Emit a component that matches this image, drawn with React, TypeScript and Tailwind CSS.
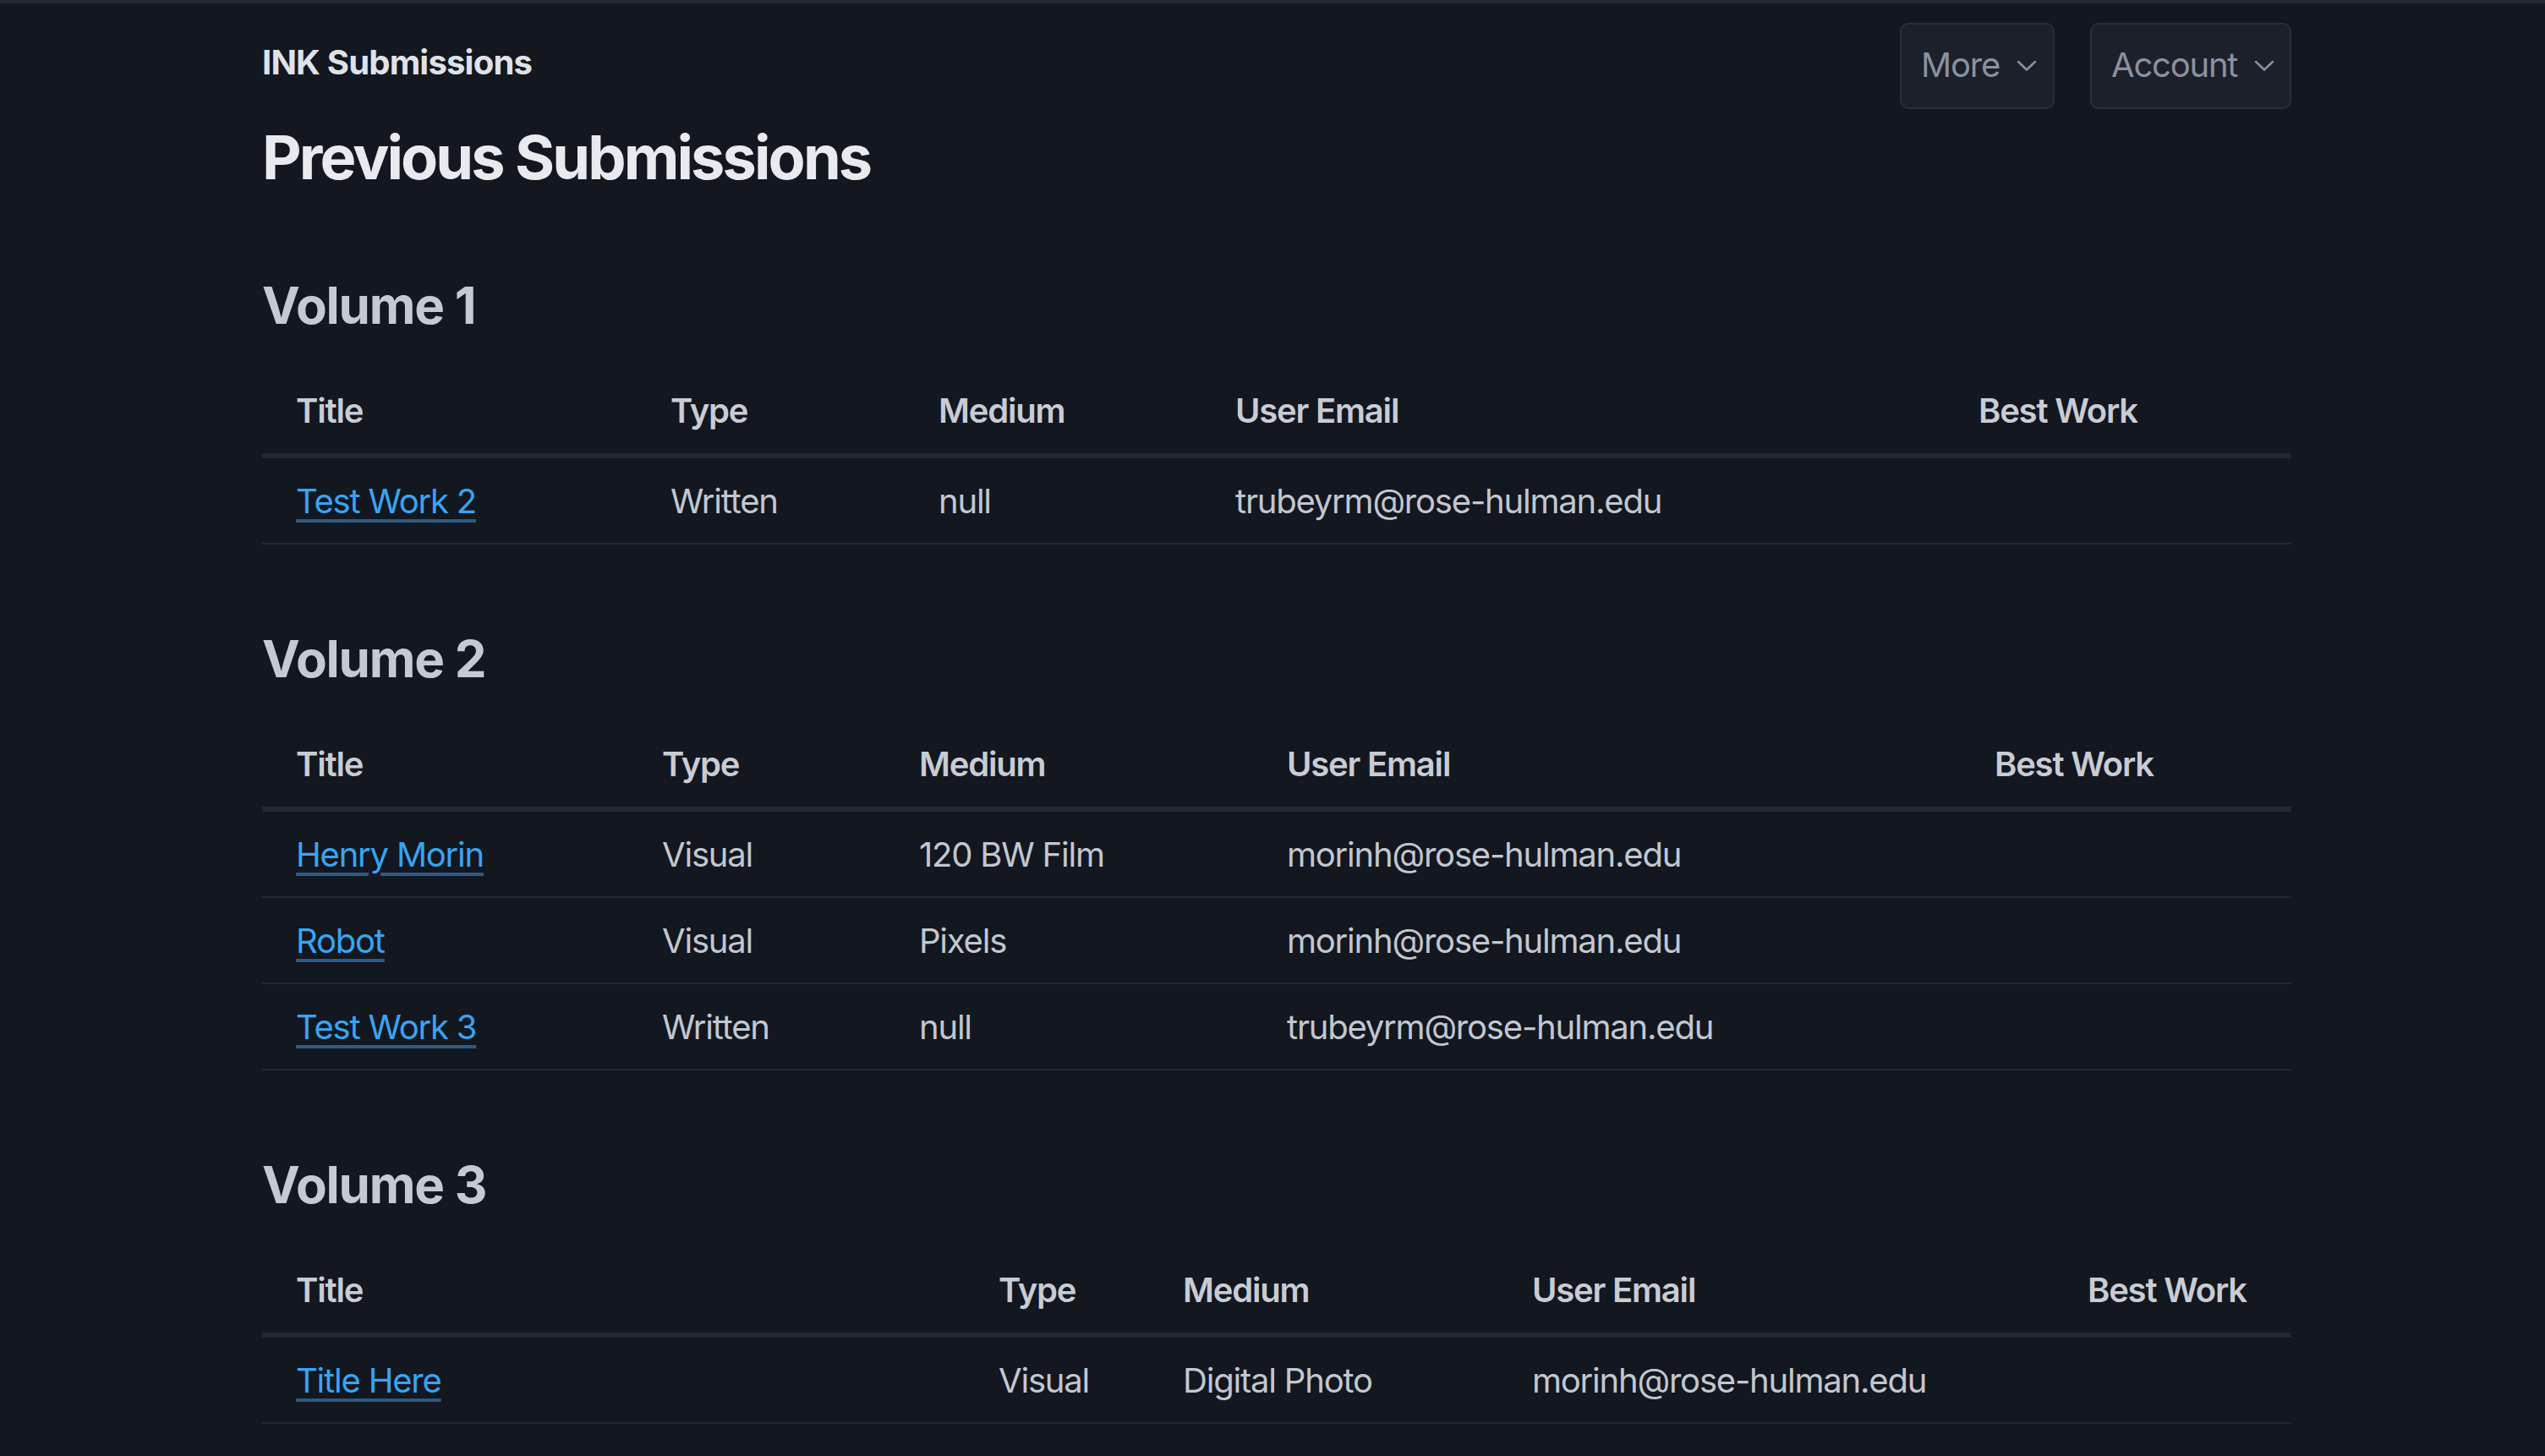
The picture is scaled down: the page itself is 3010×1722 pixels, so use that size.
import React from "react";

type Row = { title: string; type: string; medium: string; email: string };

type Volume = { name: string; cols: number[]; rows: Row[] };

const volumes: Volume[] = [
  {
    name: "Volume 1",
    cols: [443, 317, 351, 879, 410],
    rows: [{ title: "Test Work 2", type: "Written", medium: "null", email: "trubeyrm@rose-hulman.edu" }],
  },
  {
    name: "Volume 2",
    cols: [433, 304, 435, 837, 391],
    rows: [
      { title: "Henry Morin", type: "Visual", medium: "120 BW Film", email: "morinh@rose-hulman.edu" },
      { title: "Robot", type: "Visual", medium: "Pixels", email: "morinh@rose-hulman.edu" },
      { title: "Test Work 3", type: "Written", medium: "null", email: "trubeyrm@rose-hulman.edu" },
    ],
  },
  {
    name: "Volume 3",
    cols: [831, 218, 413, 657, 281],
    rows: [{ title: "Title Here", type: "Visual", medium: "Digital Photo", email: "morinh@rose-hulman.edu" }],
  },
];

const Chevron = () => (
  <svg width="24" height="14" viewBox="0 0 24 14" fill="none" className="ml-[20px] shrink-0">
    <polyline points="2,2 12,11.5 22,2" stroke="currentColor" strokeWidth="2.5" strokeLinecap="round" strokeLinejoin="round" />
  </svg>
);

const NavButton = ({ label, width }: { label: string; width: string }) => (
  <button
    className={`flex items-center h-[102px] ${width} pl-[23px] rounded-[10px] border-2 border-[#282e3a] bg-[#1c202a] text-[#8a91a0] text-[40px] leading-[60px] tracking-[-0.03em]`}
  >
    <span className="-mt-[3px]">{label}</span>
    <Chevron />
  </button>
);

const SubmissionTable = ({ volume, first }: { volume: Volume; first: boolean }) => (
  <section className={first ? "mt-[95px]" : "mt-[100px]"}>
    <h3 className="text-[60px] leading-[70px] font-bold tracking-[-0.02em] text-[#c5c9d2] mb-[40px]">{volume.name}</h3>
    <table className="w-full table-fixed border-collapse text-[40px] leading-[60px] tracking-[-0.03em]">
      <colgroup>
        {volume.cols.map((w, i) => (
          <col key={i} style={{ width: w }} />
        ))}
      </colgroup>
      <thead>
        <tr className="border-b-[6px] border-[#222731]">
          {["Title", "Type", "Medium", "User Email", "Best Work"].map((h) => (
            <th key={h} className="text-left font-semibold text-[#c8ccd4] px-[40px] py-[20px] whitespace-nowrap">
              {h}
            </th>
          ))}
        </tr>
      </thead>
      <tbody>
        {volume.rows.map((r) => (
          <tr key={r.title} className="border-b-2 border-[#222731] text-[#c2c7d0]">
            <td className="px-[40px] pt-[21px] pb-[19px] whitespace-nowrap">
              <a
                href="#"
                className="text-[#37a5f3] underline decoration-[#2d5a86] decoration-[4px] underline-offset-[7px]"
              >
                {r.title}
              </a>
            </td>
            <td className="px-[40px] pt-[21px] pb-[19px] whitespace-nowrap">{r.type}</td>
            <td className="px-[40px] pt-[21px] pb-[19px] whitespace-nowrap">{r.medium}</td>
            <td className="px-[40px] pt-[21px] pb-[19px] whitespace-nowrap">{r.email}</td>
            <td className="px-[40px] pt-[21px] pb-[19px]"></td>
          </tr>
        ))}
      </tbody>
    </table>
  </section>
);

export default function App() {
  return (
    <div
      className="min-h-screen bg-[#13171f] border-t-4 border-[#24282c]"
      style={{ fontFamily: "Inter, 'Noto Sans', sans-serif" }}
    >
      <div className="w-[2400px] ml-[310px] pb-[40px]">
        <nav className="flex justify-between items-start h-[137px] pt-[23px]">
          <strong className="mt-[17px] text-[40px] leading-[60px] font-bold tracking-[-0.02em] text-[#dfe2e8]">
            INK Submissions
          </strong>
          <div className="flex gap-[42px]">
            <NavButton label="More" width="w-[183px]" />
            <NavButton label="Account" width="w-[238px]" />
          </div>
        </nav>
        <h1 className="text-[72px] leading-[90px] font-bold tracking-[-0.04em] text-[#e8eaed]">Previous Submissions</h1>
        {volumes.map((v, i) => (
          <SubmissionTable key={v.name} volume={v} first={i === 0} />
        ))}
      </div>
    </div>
  );
}
